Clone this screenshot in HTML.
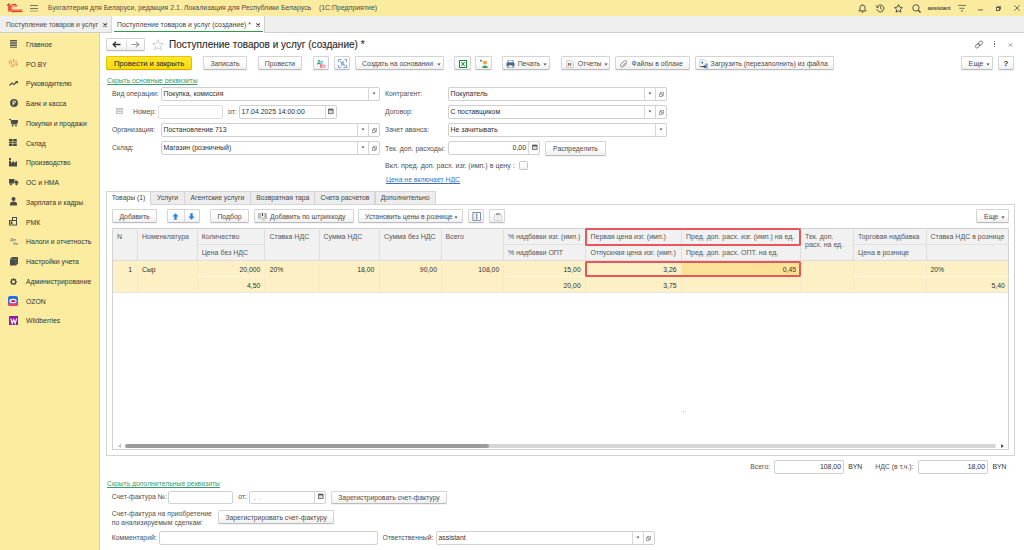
<!DOCTYPE html>
<html><head><meta charset="utf-8">
<style>
*{margin:0;padding:0;box-sizing:border-box}
html,body{width:1024px;height:550px;overflow:hidden;background:#fff;font-family:"Liberation Sans",sans-serif;font-size:7px;color:#4d4d4d}
.a{position:absolute;white-space:nowrap}
.t{position:absolute;white-space:nowrap;line-height:10px;font-size:6.85px;color:#505050}
.b{position:absolute;border:1px solid #d4d4d4;border-bottom-color:#bcbcbc;border-radius:1.5px;background:linear-gradient(#fff 40%,#efefef);box-shadow:0 .6px .6px rgba(0,0,0,.1);font-size:6.85px;color:#4a4a4a;text-align:center;line-height:12px;white-space:nowrap}
.f{position:absolute;border:1px solid #d0d0d0;border-radius:2px;background:#fff;font-size:6.9px;color:#2e2e2e;line-height:11px;white-space:nowrap;overflow:hidden}
.dv{position:absolute;top:0;bottom:0;width:1px;background:#d6d6d6}
.dd{position:absolute;top:4px;width:0;height:0;border-left:2px solid transparent;border-right:2px solid transparent;border-top:2px solid #555}
.ddf{position:absolute;width:0;height:0;border-left:1.4px solid transparent;border-right:1.4px solid transparent;border-top:1.8px solid #444}
.lnk{color:#3a9c6a;text-decoration:underline;text-decoration-skip-ink:none;font-size:6.8px}
</style></head><body>
<div class="a" style="left:0px;top:0px;width:1024px;height:16px;background:#fbeb9f"></div>
<div class="t" style="left:48px;top:3.20px;color:#4a4a4a;font-size:6.95px">Бухгалтерия для Беларуси, редакция 2.1. Локализация для Республики Беларусь&nbsp;&nbsp;&nbsp;&nbsp;(1С:Предприятие)</div>
<svg class="a" style="left:6px;top:3px" width="18" height="10" viewBox="0 0 18 10" fill="none" stroke="#e2302c"><path d="M1.2 2.6L3 1.2V8.8" stroke-width="1.4"/><path d="M10.8 3.2A3.6 3.6 0 1 0 8.2 8.6" stroke-width="1.2"/><path d="M9.6 4A2.1 2.1 0 1 0 8.2 7.2" stroke-width=".8"/><path d="M8 7.1h8.4M8 8.6h8.4" stroke-width="1"/></svg>
<svg class="a" style="left:30px;top:5px" width="8" height="7" viewBox="0 0 8 7" ><path d="M0 .5h8M0 3.5h8" stroke="#6b6650" stroke-width=".9"/><path d="M0 6h8" stroke="#a09a80" stroke-width=".9"/></svg>
<svg class="a" style="left:857.5px;top:4px" width="9" height="9" viewBox="0 0 9 9" fill="none" stroke="#3a3a3a" stroke-width=".85"><path d="M.8 6.9h7.4L7 5.6V3.6A2.5 2.5 0 002 3.6v2z"/><path d="M3.6 8.1h1.8" stroke-width="1"/><path d="M4.5.2v.6"/></svg>
<svg class="a" style="left:875.5px;top:4px" width="9" height="9" viewBox="0 0 9 9" fill="none" stroke="#3a3a3a" stroke-width=".85"><path d="M1.6 2.3A3.5 3.5 0 11.9 5"/><path d="M.6 1.4l.3 2.1 2-.4"/><path d="M4.6 2.2v2.4l1.4 1.3"/></svg>
<svg class="a" style="left:893.5px;top:4px" width="9" height="9" viewBox="0 0 9 9" fill="none" stroke="#3a3a3a" stroke-width=".85" stroke-linejoin="round"><path d="M4.5.6l1.2 2.5 2.7.4-2 1.9.5 2.8-2.4-1.3-2.4 1.3.5-2.8-2-1.9 2.7-.4z"/></svg>
<svg class="a" style="left:911.5px;top:4px" width="9" height="9" viewBox="0 0 9 9" fill="none" stroke="#3a3a3a" stroke-width=".85"><circle cx="3.9" cy="3.9" r="3.2"/><path d="M6.2 6.2l2.3 2.3" stroke-width="1.2"/></svg>
<div class="t" style="left:927.5px;top:2.8px;font-size:6px;color:#222;letter-spacing:-.05px">assistant</div>
<svg class="a" style="left:958px;top:4px" width="8" height="8" viewBox="0 0 8 8" ><path d="M0 1.4h8M1.3 4.3h5.4" stroke="#555" stroke-width=".8"/><path d="M3.3 6.9h1.4" stroke="#444" stroke-width="1.1"/></svg>
<svg class="a" style="left:978px;top:4px" width="6" height="9" viewBox="0 0 6 9" ><path d="M0 5.9h5" stroke="#444" stroke-width=".8"/></svg>
<svg class="a" style="left:996px;top:5.5px" width="5" height="5" viewBox="0 0 5 5" fill="none" stroke="#444" stroke-width=".75"><rect x=".4" y="1.5" width="3" height="3" stroke-width=".85"/><path d="M1.5 1.5V.4h3v3H3.4"/></svg>
<svg class="a" style="left:1013.5px;top:5px" width="6" height="6" viewBox="0 0 6 6" fill="none" stroke="#555" stroke-width=".85"><path d="M.3.3l5.4 5.4M5.7.3L.3 5.7"/></svg>
<div class="a" style="left:0px;top:16px;width:1024px;height:17px;background:#efefef;border-bottom:1px solid #cfcfcf"></div>
<div class="a" style="left:0px;top:16px;width:112px;height:17px;border-right:1px solid #d9d9d9;border-bottom:1px solid #cfcfcf"></div>
<div class="t" style="left:6px;top:19.60px;color:#4a4a4a;font-size:6.75px">Поступление товаров и услуг</div>
<svg class="a" style="left:103.3px;top:22.7px" width="4.2" height="4.2" viewBox="0 0 4.2 4.2" stroke="#444" stroke-width="1.1"><path d="M.4.4l3.4 3.4M3.8.4L.4 3.8"/></svg>
<div class="a" style="left:112px;top:16px;width:153px;height:17px;background:#fff;border-right:1px solid #d0d0d0"></div>
<div class="a" style="left:114px;top:31px;width:149px;height:1px;background:#2f9a48"></div>
<div class="t" style="left:117px;top:19.60px;color:#444;font-size:6.85px">Поступление товаров и услуг (создание) *</div>
<svg class="a" style="left:256.3px;top:22.7px" width="4.2" height="4.2" viewBox="0 0 4.2 4.2" stroke="#444" stroke-width="1.1"><path d="M.4.4l3.4 3.4M3.8.4L.4 3.8"/></svg>
<div class="a" style="left:0px;top:33px;width:100px;height:517px;background:#fbeca0"></div>
<div class="a" style="left:99px;top:33px;width:1px;height:517px;background:#dcd59c"></div>
<div class="t" style="left:26px;top:39.80px;color:#333">Главное</div>
<div class="t" style="left:26px;top:59.55px;color:#333">PO.BY</div>
<div class="t" style="left:26px;top:79.30px;color:#333">Руководителю</div>
<div class="t" style="left:26px;top:99.05px;color:#333">Банк и касса</div>
<div class="t" style="left:26px;top:118.80px;color:#333">Покупки и продажи</div>
<div class="t" style="left:26px;top:138.55px;color:#333">Склад</div>
<div class="t" style="left:26px;top:158.30px;color:#333">Производство</div>
<div class="t" style="left:26px;top:178.05px;color:#333">ОС и НМА</div>
<div class="t" style="left:26px;top:197.80px;color:#333">Зарплата и кадры</div>
<div class="t" style="left:26px;top:217.55px;color:#333">РМК</div>
<div class="t" style="left:26px;top:237.30px;color:#333">Налоги и отчетность</div>
<div class="t" style="left:26px;top:257.05px;color:#333">Настройки учета</div>
<div class="t" style="left:26px;top:276.80px;color:#333">Администрирование</div>
<div class="t" style="left:26px;top:296.55px;color:#333">OZON</div>
<div class="t" style="left:26px;top:316.30px;color:#333">Wildberries</div>
<svg class="a" style="left:10px;top:40px" width="7" height="8" viewBox="0 0 7 8" ><path d="M0 .6h7M0 2.2h7M0 3.8h7M0 5.4h7M0 7.2h7" stroke="#4a4a4a" stroke-width="1.1" opacity=".9"/></svg>
<svg class="a" style="left:8.5px;top:59px" width="9" height="8" viewBox="0 0 9 8" ><g stroke="#e8503a" stroke-width=".8" stroke-dasharray="1.2 .6"><path d="M4.5 0v8M0 4h9M1.3 1l6.4 6M7.7 1L1.3 7"/></g><circle cx="4.5" cy="4" r="1.3" fill="#fbeca0"/><g fill="#e83a5a"><circle cx=".8" cy="2.5" r=".6"/><circle cx="8" cy="5.5" r=".6"/><circle cx="3" cy="7.5" r=".5"/></g></svg>
<svg class="a" style="left:9px;top:80.5px" width="9" height="5" viewBox="0 0 9 5" ><path d="M.5 4.5L3 2l2 1.5L7.5 1" stroke="#4a4a4a" stroke-width="1.2" fill="none"/><path d="M6 0h3v3z" fill="#4a4a4a"/></svg>
<svg class="a" style="left:10px;top:99px" width="8" height="8" viewBox="0 0 8 8" ><circle cx="4" cy="4" r="3.9" fill="#4a4a4a"/><path d="M3.2 6.3V1.9h1.2a1.15 1.15 0 010 2.3H2.5" stroke="#fbeca0" stroke-width="1" fill="none"/></svg>
<svg class="a" style="left:9px;top:119px" width="9" height="7.5" viewBox="0 0 9 7.5" ><path d="M0 .5h1.8l1 4.5h5l1-3.5H2.5" stroke="#4a4a4a" stroke-width="1" fill="none"/><path d="M2.5 1.5h6l-1 3.5H3z" fill="#4a4a4a"/><circle cx="3.5" cy="6.6" r=".9" fill="#4a4a4a"/><circle cx="7" cy="6.6" r=".9" fill="#4a4a4a"/></svg>
<svg class="a" style="left:9px;top:139px" width="8" height="7" viewBox="0 0 8 7" ><g fill="#4a4a4a"><rect x="0" y="0" width="3.6" height="2"/><rect x="4.2" y="0" width="3.6" height="2"/><rect x="0" y="2.5" width="3.6" height="2"/><rect x="4.2" y="2.5" width="3.6" height="2"/><rect x="0" y="5" width="3.6" height="2"/><rect x="4.2" y="5" width="3.6" height="2"/></g></svg>
<svg class="a" style="left:9px;top:158px" width="8" height="8.5" viewBox="0 0 8 8.5" ><path d="M0 8.5V3h2v2l3-2v2l3-2v5.5z" fill="#4a4a4a"/><rect x="0" y="0" width="2" height="2.3" fill="#4a4a4a"/></svg>
<svg class="a" style="left:9px;top:179px" width="9.5" height="6.5" viewBox="0 0 9.5 6.5" ><rect x="0" y="0" width="5.5" height="4.5" fill="#4a4a4a"/><path d="M6 1.5h2l1.5 2v1H6z" fill="#4a4a4a"/><circle cx="2" cy="5.3" r="1.1" fill="#4a4a4a"/><circle cx="7.5" cy="5.3" r="1.1" fill="#4a4a4a"/></svg>
<svg class="a" style="left:10px;top:197px" width="7" height="8.5" viewBox="0 0 7 8.5" ><circle cx="3.5" cy="2" r="2" fill="#4a4a4a"/><path d="M0 8.5V7a3.5 2.5 0 017 0v1.5z" fill="#4a4a4a"/></svg>
<svg class="a" style="left:9px;top:217px" width="8" height="8.5" viewBox="0 0 8 8.5" ><rect x=".5" y="3.5" width="7" height="4.5" fill="none" stroke="#4a4a4a" stroke-width="1"/><rect x="3.5" y=".5" width="4" height="3" fill="none" stroke="#4a4a4a" stroke-width="1"/><rect x="1.5" y="4.5" width="2" height="2.5" fill="#4a4a4a"/></svg>
<svg class="a" style="left:10px;top:237px" width="8" height="8" viewBox="0 0 8 8" ><text x="0" y="3.5" font-size="3.8" font-style="italic" font-family="Liberation Sans" fill="#4a4a4a">Дт</text><text x="3.2" y="7.8" font-size="3.8" font-style="italic" font-family="Liberation Sans" fill="#4a4a4a">Кт</text></svg>
<svg class="a" style="left:9.5px;top:257px" width="8" height="8.5" viewBox="0 0 8 8.5" ><path d="M0 2.2L2 0h6v6.3L6 8.5H0z" fill="#4a4a4a"/><path d="M0 2.2h6v6.3M6 2.2L8 0" stroke="#888" stroke-width=".5" fill="none"/></svg>
<svg class="a" style="left:10px;top:277.5px" width="7" height="7.5" viewBox="0 0 7 7.5" ><circle cx="3.5" cy="3.75" r="2.2" fill="none" stroke="#4a4a4a" stroke-width="1.3"/><g stroke="#4a4a4a" stroke-width="1.1"><path d="M3.5 0v1.3M3.5 6.2v1.3M0 3.75h1.3M5.7 3.75H7M1 1.25l.9.9M5.1 5.35l.9.9M6 1.25l-.9.9M1.9 5.35L1 6.25"/></g></svg>
<svg class="a" style="left:8.3px;top:295.5px" width="10" height="10" viewBox="0 0 10 10" ><rect x="0" y="0" width="10" height="10" rx="2.2" fill="#1f6fe8"/><path d="M0 6.5Q5 9 10 6.5V8a2 2 0 01-2 2H2a2 2 0 01-2-2z" fill="#f23a6b"/><ellipse cx="5" cy="5" rx="3.6" ry="2.3" fill="#fff"/><ellipse cx="5.2" cy="5.1" rx="2.4" ry="1.2" fill="#e8174a"/></svg>
<svg class="a" style="left:8.8px;top:315.7px" width="9.5" height="9.5" viewBox="0 0 9.5 9.5" ><rect x="0" y="0" width="9.5" height="9.5" rx=".8" fill="#8b1fa3"/><path d="M1.8 2.5l1.4 5 1.5-4 1.5 4 1.4-5" stroke="#fff" stroke-width="1.1" fill="none"/></svg>
<div class="b" style="left:106px;top:38px;width:39px;height:12.5px"></div>
<div class="a" style="left:126px;top:39px;width:1px;height:11px;background:#ddd"></div>
<svg class="a" style="left:112px;top:41px" width="9" height="7" viewBox="0 0 9 7" fill="none" stroke="#333" stroke-width="1.3"><path d="M8.5 3.5H1.5M4 .8L1.2 3.5 4 6.2"/></svg>
<svg class="a" style="left:131px;top:41px" width="9" height="7" viewBox="0 0 9 7" fill="none" stroke="#999" stroke-width="1.1"><path d="M.5 3.5h7M5 .8l2.8 2.7L5 6.2"/></svg>
<svg class="a" style="left:152px;top:38.5px" width="12" height="12" viewBox="0 0 12 12" fill="none" stroke="#c8c8c8" stroke-width=".9"><path d="M6 .8l1.6 3.4 3.7.4-2.8 2.5.8 3.7L6 8.9 2.7 10.8l.8-3.7L.7 4.6l3.7-.4z"/></svg>
<div class="a" style="left:169px;top:38px;font-size:10px;line-height:13px;color:#2a2a2a;-webkit-text-stroke:.12px #2a2a2a">Поступление товаров и услуг (создание) *</div>
<svg class="a" style="left:973.5px;top:39.5px" width="10" height="9" viewBox="0 0 10 9" fill="none" stroke="#707070" stroke-width=".85"><g transform="rotate(-42 5 4.5)"><rect x=".6" y="2.9" width="5.2" height="3.2" rx="1.6"/><rect x="4.2" y="2.9" width="5.2" height="3.2" rx="1.6"/></g></svg>
<div class="a" style="left:993.8px;top:41px;width:1.2px;height:6px;background:linear-gradient(#666 0 1.3px,transparent 1.3px 2.3px,#666 2.3px 3.7px,transparent 3.7px 4.7px,#666 4.7px)"></div>
<svg class="a" style="left:1008px;top:43px" width="5" height="4" viewBox="0 0 5 4" stroke="#888" stroke-width=".8"><path d="M.5.2l4 3.6M4.5.2l-4 3.6"/></svg>
<div class="b" style="left:106px;top:56px;width:86px;height:14px;line-height:13.4px;background:linear-gradient(#ffe82e,#f7da06);border-color:#e0c410 #dcbf08 #cfae00;color:#333;font-size:7.6px;-webkit-text-stroke:.1px #333">Провести и закрыть</div>
<div class="b" style="left:203px;top:56px;width:44px;height:14px;line-height:13px;">Записать</div>
<div class="b" style="left:258px;top:56px;width:44px;height:14px;line-height:13px;">Провести</div>
<div class="b" style="left:313px;top:56px;width:16px;height:14px;line-height:13px;"><svg style="position:absolute;left:3px;top:2px" width="10" height="10" viewBox="0 0 10 10"><text x="0" y="4.6" font-size="5" font-weight="bold" fill="#2a9a55" font-family="Liberation Sans">Дт</text><text x="3" y="8.8" font-size="5" font-weight="bold" fill="#f05050" font-family="Liberation Sans">Кт</text></svg></div>
<div class="b" style="left:334px;top:56px;width:16px;height:14px;line-height:13px;"><svg style="position:absolute;left:3px;top:2px" width="9" height="9" viewBox="0 0 9 9" fill="none" stroke="#6f95d0" stroke-width=".9"><path d="M.5 3V.5h3M8.5 6v2.5h-3M.5 6v2.5h2M8.5 3V.5h-2"/><path d="M2 2.5l2 1.5v3M7 6.5L5 5V2" stroke="#4a7fcf"/></svg></div>
<div class="b" style="left:355px;top:56px;width:89px;height:14px;line-height:13px;text-align:left;padding-left:6px">Создать на основании<svg style="position:absolute;left:81px;top:5.5px" width="4" height="3" viewBox="0 0 4 3"><path d="M.4.5h3.2L2 2.5z" fill="#444"/></svg></div>
<div class="b" style="left:454px;top:56px;width:17px;height:14px;line-height:13px;"><svg style="position:absolute;left:4px;top:2.5px" width="8" height="8" viewBox="0 0 8 8"><rect x=".5" y=".5" width="7" height="7" fill="#fff" stroke="#1f8a3c" stroke-width="1"/><path d="M2.3 2l3.4 4M5.7 2L2.3 6" stroke="#1f8a3c" stroke-width="1"/></svg></div>
<div class="b" style="left:475px;top:56px;width:17px;height:14px;line-height:13px;"><svg style="position:absolute;left:3.5px;top:2px" width="9" height="10" viewBox="0 0 9 10"><path d="M.6 1.2l1.8 1.6M.6 1.2h1.3M.6 1.2v1.3" stroke="#444" stroke-width=".7" fill="none"/><circle cx="5" cy="3.6" r="1.9" fill="#f5a02a"/><path d="M2.2 9a2.8 2.6 0 015.6 0z" fill="#34a060"/></svg></div>
<div class="b" style="left:502px;top:56px;width:48px;height:14px;line-height:13px;"><svg style="position:absolute;left:3px;top:2.5px" width="9" height="8" viewBox="0 0 9 8"><rect x="2" y="0" width="5" height="3" fill="#fff" stroke="#555" stroke-width=".7"/><rect x=".5" y="2.5" width="8" height="4" rx="1" fill="#3e68a8"/><rect x="2" y="5" width="5" height="3" fill="#fff" stroke="#555" stroke-width=".7"/></svg><span style="position:absolute;left:14.7px;">Печать</span><svg style="position:absolute;left:40px;top:5.5px" width="4" height="3" viewBox="0 0 4 3"><path d="M.4.5h3.2L2 2.5z" fill="#444"/></svg></div>
<div class="b" style="left:561px;top:56px;width:49px;height:14px;line-height:13px;"><svg style="position:absolute;left:4px;top:2.5px" width="8" height="8" viewBox="0 0 8 8"><path d="M.8.4h4.5l2 2v5.2H.8z" fill="#fafafa" stroke="#aaa" stroke-width=".6"/><rect x="2" y="3" width="1.3" height="2.6" fill="#e03a3a"/><rect x="3.8" y="3" width="1.3" height="2.6" fill="#2ea050"/></svg><span style="position:absolute;left:15.8px;">Отчеты</span><svg style="position:absolute;left:41.8px;top:5.5px" width="4" height="3" viewBox="0 0 4 3"><path d="M.4.5h3.2L2 2.5z" fill="#444"/></svg></div>
<div class="b" style="left:615px;top:56px;width:75px;height:14px;line-height:13px;"><svg style="position:absolute;left:4px;top:2.5px" width="8" height="8" viewBox="0 0 8 8" fill="none" stroke="#8a8a8a" stroke-width="1"><path d="M6.8 3.2L3.4 6.6a1.7 1.7 0 01-2.4-2.4L4.6.6a1.1 1.1 0 011.6 1.6L2.7 5.7"/></svg><span style="position:absolute;left:15.5px;">Файлы в облаке</span></div>
<div class="b" style="left:695px;top:56px;width:139px;height:14px;line-height:13px;"><svg style="position:absolute;left:2.5px;top:2px" width="10" height="10" viewBox="0 0 10 10"><path d="M.8 8.5V.8h4.5l2 2" fill="#fff" stroke="#aaa" stroke-width=".6"/><circle cx="3.2" cy="3.4" r="1" fill="#2a7de0"/><circle cx="3.6" cy="4.3" r=".6" fill="#3cb060"/><path d="M6 4.5h2.6v5H6z" fill="#6a9ee0"/><path d="M1.5 7.6h4.6M4.8 6.4l1.4 1.2-1.4 1.2" stroke="#222" stroke-width=".9" fill="none"/></svg><span style="position:absolute;left:14.6px;">Загрузить (перезаполнить) из файла</span></div>
<div class="b" style="left:961px;top:56px;width:32px;height:14px;line-height:13px;text-align:left;padding-left:6.6px;font-size:7.2px">Еще<svg style="position:absolute;left:24.3px;top:5.5px" width="4" height="3" viewBox="0 0 4 3"><path d="M.4.5h3.2L2 2.5z" fill="#444"/></svg></div>
<div class="b" style="left:998px;top:56px;width:16px;height:14px;line-height:13px;font-weight:bold;color:#333;font-size:8px">?</div>
<div class="t lnk" style="left:107px;top:75.6px">Скрыть основные реквизиты</div>
<div class="t" style="left:112px;top:89.00px;">Вид операции:</div>
<div class="f" style="left:161px;top:87px;width:219px;height:14px;line-height:12px;"><span style="position:absolute;left:1.5px;top:0;">Покупка, комиссия</span><div class="dv" style="left:206px"></div><svg style="position:absolute;left:209.5px;top:3.8px" width="4" height="3" viewBox="0 0 4 3"><path d="M.5.6h3L2 2.4z" fill="#555"/></svg></div>
<svg class="a" style="left:115.5px;top:107.5px" width="7" height="6" viewBox="0 0 7 6" ><rect x=".5" y=".5" width="6" height="5" fill="#eee" stroke="#aaa" stroke-width=".7"/><path d="M1.5 2h4M1.5 3.5h4" stroke="#aaa" stroke-width=".6"/></svg>
<div class="t" style="left:133px;top:107.00px;">Номер:</div>
<div class="f" style="left:158px;top:105px;width:65px;height:14px;line-height:12px;border-color:#dedede"><span style="position:absolute;left:1.5px;top:0;"></span></div>
<div class="t" style="left:228px;top:107.00px;">от:</div>
<div class="f" style="left:239px;top:105px;width:98px;height:14px;line-height:12px;"><span style="position:absolute;left:1.5px;top:0;">17.04.2025 14:00:00</span><div class="dv" style="left:85px"></div><svg style="position:absolute;left:87.80000000000001px;top:1.8px" width="6" height="6" viewBox="0 0 6 6"><rect x=".5" y="1.2" width="4.6" height="4.3" fill="#dcdcdc" stroke="#606060" stroke-width=".8"/><rect x=".5" y="1.2" width="4.6" height="1.2" fill="#505050"/><path d="M1.8 .2v1.2M3.8.2v1.2" stroke="#606060" stroke-width=".6"/></svg></div>
<div class="t" style="left:112px;top:125.00px;">Организация:</div>
<div class="f" style="left:161px;top:123px;width:219px;height:14px;line-height:12px;"><span style="position:absolute;left:1.5px;top:0;">Постановление 713</span><div class="dv" style="left:195px"></div><div class="dv" style="left:206px"></div><svg style="position:absolute;left:199.0px;top:3.8px" width="4" height="3" viewBox="0 0 4 3"><path d="M.5.6h3L2 2.4z" fill="#555"/></svg><svg style="position:absolute;left:209.5px;top:3.5px" width="5" height="5" viewBox="0 0 5 5" fill="none" stroke="#555" stroke-width=".6"><path d="M.3 1.9h2.8v2.8H.3z"/><path d="M1.6 1.9V.3h3.1v2.9H3.1"/></svg></div>
<div class="t" style="left:112px;top:143.00px;">Склад:</div>
<div class="f" style="left:161px;top:141px;width:219px;height:14px;line-height:12px;"><span style="position:absolute;left:1.5px;top:0;">Магазин (розничный)</span><div class="dv" style="left:195px"></div><div class="dv" style="left:206px"></div><svg style="position:absolute;left:199.0px;top:3.8px" width="4" height="3" viewBox="0 0 4 3"><path d="M.5.6h3L2 2.4z" fill="#555"/></svg><svg style="position:absolute;left:209.5px;top:3.5px" width="5" height="5" viewBox="0 0 5 5" fill="none" stroke="#555" stroke-width=".6"><path d="M.3 1.9h2.8v2.8H.3z"/><path d="M1.6 1.9V.3h3.1v2.9H3.1"/></svg></div>
<div class="t" style="left:385px;top:89.00px;">Контрагент:</div>
<div class="f" style="left:448px;top:87px;width:219px;height:14px;line-height:12px;"><span style="position:absolute;left:1.5px;top:0;">Покупатель</span><div class="dv" style="left:195px"></div><div class="dv" style="left:206px"></div><svg style="position:absolute;left:199.0px;top:3.8px" width="4" height="3" viewBox="0 0 4 3"><path d="M.5.6h3L2 2.4z" fill="#555"/></svg><svg style="position:absolute;left:209.5px;top:3.5px" width="5" height="5" viewBox="0 0 5 5" fill="none" stroke="#555" stroke-width=".6"><path d="M.3 1.9h2.8v2.8H.3z"/><path d="M1.6 1.9V.3h3.1v2.9H3.1"/></svg></div>
<div class="t" style="left:385px;top:107.00px;">Договор:</div>
<div class="f" style="left:448px;top:105px;width:219px;height:14px;line-height:12px;"><span style="position:absolute;left:1.5px;top:0;">С поставщиком</span><div class="dv" style="left:195px"></div><div class="dv" style="left:206px"></div><svg style="position:absolute;left:199.0px;top:3.8px" width="4" height="3" viewBox="0 0 4 3"><path d="M.5.6h3L2 2.4z" fill="#555"/></svg><svg style="position:absolute;left:209.5px;top:3.5px" width="5" height="5" viewBox="0 0 5 5" fill="none" stroke="#555" stroke-width=".6"><path d="M.3 1.9h2.8v2.8H.3z"/><path d="M1.6 1.9V.3h3.1v2.9H3.1"/></svg></div>
<div class="t" style="left:385px;top:125.00px;">Зачет аванса:</div>
<div class="f" style="left:448px;top:123px;width:219px;height:14px;line-height:12px;"><span style="position:absolute;left:1.5px;top:0;">Не зачитывать</span><div class="dv" style="left:206px"></div><svg style="position:absolute;left:210.0px;top:3.8px" width="4" height="3" viewBox="0 0 4 3"><path d="M.5.6h3L2 2.4z" fill="#555"/></svg></div>
<div class="t" style="left:385px;top:143.50px;font-size:7px">Тек. доп. расходы:</div>
<div class="f" style="left:448px;top:141px;width:92px;height:14px;line-height:12px;"><span style="position:absolute;right:13px;top:0;">0,00</span><div class="dv" style="left:79px"></div><svg style="position:absolute;left:82.5px;top:1.8px" width="6" height="6" viewBox="0 0 6 6"><rect x=".5" y="1.2" width="4.6" height="4.3" fill="#dcdcdc" stroke="#606060" stroke-width=".8"/><rect x=".5" y="1.2" width="4.6" height="1.2" fill="#505050"/><path d="M1.8 .2v1.2M3.8.2v1.2" stroke="#606060" stroke-width=".6"/></svg></div>
<div class="b" style="left:545px;top:141px;width:61px;height:15px;line-height:14px;">Распределить</div>
<div class="t" style="left:385px;top:160.50px;font-size:7.1px">Вкл. пред. доп. расх. изг. (имп.) в цену :</div>
<div class="a" style="left:519px;top:161px;width:9px;height:9px;border:1px solid #c4c4c4;border-radius:1.5px;background:linear-gradient(#fff 60%,#f0f0f0)"></div>
<div class="t" style="left:386px;top:174.8px;color:#3b6fb8;text-decoration:underline;text-decoration-skip-ink:none">Цена не включает НДС</div>
<div class="a" style="left:106px;top:204px;width:909px;height:252px;border:1px solid #d4d4d4"></div>
<div class="a" style="left:150.4px;top:191px;width:34.2px;height:14px;background:#ececec;border:1px solid #d4d4d4;text-align:center;line-height:12px;color:#444;font-size:6.8px">Услуги</div>
<div class="a" style="left:183.6px;top:191px;width:67.6px;height:14px;background:#ececec;border:1px solid #d4d4d4;text-align:center;line-height:12px;color:#444;font-size:6.8px">Агентские услуги</div>
<div class="a" style="left:250.2px;top:191px;width:65.2px;height:14px;background:#ececec;border:1px solid #d4d4d4;text-align:center;line-height:12px;color:#444;font-size:6.8px">Возвратная тара</div>
<div class="a" style="left:314.4px;top:191px;width:61.1px;height:14px;background:#ececec;border:1px solid #d4d4d4;text-align:center;line-height:12px;color:#444;font-size:6.8px">Счета расчетов</div>
<div class="a" style="left:374.5px;top:191px;width:61.2px;height:14px;background:#ececec;border:1px solid #d4d4d4;text-align:center;line-height:12px;color:#444;font-size:6.8px">Дополнительно</div>
<div class="a" style="left:106px;top:190.5px;width:45px;height:14.5px;background:#fff;border:1px solid #d4d4d4;border-bottom:none;text-align:center;line-height:12px;color:#444;font-size:6.8px">Товары (1)</div>
<div class="b" style="left:112px;top:209px;width:45px;height:14px;line-height:13px;">Добавить</div>
<div class="b" style="left:167px;top:209px;width:33px;height:14px;line-height:13px;"><div style="position:absolute;left:15.5px;top:0;bottom:0;width:1px;background:#d8d8d8"></div><svg style="position:absolute;left:4px;top:3px" width="7" height="7" viewBox="0 0 7 7"><path d="M3.5 .2L6.6 3.6H4.7V6.8H2.3V3.6H.4z" fill="#2a82e6"/></svg><svg style="position:absolute;left:19.8px;top:3px" width="7" height="7" viewBox="0 0 7 7"><path d="M3.5 6.8L6.6 3.4H4.7V.2H2.3v3.2H.4z" fill="#2a82e6"/></svg></div>
<div class="b" style="left:210px;top:209px;width:39px;height:14px;line-height:13px;">Подбор</div>
<div class="b" style="left:254px;top:209px;width:100px;height:14px;line-height:13px;"><svg style="position:absolute;left:3px;top:2.5px" width="9" height="9" viewBox="0 0 9 9"><path d="M.8 0v6M2.2 0v5M7 0v6M8.2 0v6" stroke="#8a8a8a" stroke-width=".9"/><path d="M4.5 0v3" stroke="#444" stroke-width="1.2"/><circle cx="4.3" cy="5.6" r="1.4" fill="#cfe6f7" stroke="#9bb" stroke-width=".5"/><path d="M5.2 6.6l1.5 1.6" stroke="#d9a070" stroke-width="1"/></svg><span style="position:absolute;left:15px;">Добавить по штрихкоду</span></div>
<div class="b" style="left:358px;top:209px;width:105px;height:14px;line-height:13px;text-align:left;padding-left:6px">Установить цены в рознице<svg style="position:absolute;left:95px;top:5.5px" width="4" height="3" viewBox="0 0 4 3"><path d="M.4.5h3.2L2 2.5z" fill="#444"/></svg></div>
<div class="b" style="left:468px;top:209px;width:16px;height:14px;line-height:13px;"><svg style="position:absolute;left:3px;top:2px" width="9" height="9" viewBox="0 0 9 9"><rect x=".9" y=".5" width="7.6" height="7.8" fill="#fff" stroke="#5a6fa0" stroke-width=".8"/><rect x="1.3" y=".9" width="1" height="7" fill="#ccc"/><path d="M4.7 1.5v5.8" stroke="#444" stroke-width=".6"/><path d="M3.6 3.2l1.1-1.3 1.1 1.3zM3.6 5.6l1.1 1.3 1.1-1.3z" fill="#3a6fc0"/></svg></div>
<div class="b" style="left:489px;top:209px;width:16px;height:14px;line-height:13px;"><svg style="position:absolute;left:2.5px;top:2px" width="10" height="10" viewBox="0 0 10 10"><path d="M1.5 2.5Q1 5 1.3 8.5h7.4Q9 5 8.5 2.5L6 1.5H4z" fill="#f3f3f3" stroke="#bbb" stroke-width=".6"/><path d="M5 1.6v6.9" stroke="#ccc" stroke-width=".5"/><path d="M2.8 1.6l1.2 1.6L5 1.8M7.2 1.6L6 3.2 5 1.8" fill="#555"/></svg></div>
<div class="b" style="left:976px;top:209px;width:33px;height:14px;line-height:13px;text-align:left;padding-left:7px;font-size:7px">Еще<svg style="position:absolute;left:24px;top:5.5px" width="4" height="3" viewBox="0 0 4 3"><path d="M.4.5h3.2L2 2.5z" fill="#444"/></svg></div>
<div class="a" style="left:112px;top:228px;width:897px;height:222px;border:1px solid #d2d2d2"></div>
<div class="a" style="left:113px;top:229px;width:895px;height:32px;background:#f1f1f1"></div>
<div class="a" style="left:113px;top:261px;width:895px;height:30.5px;background:#fcf0c4"></div>
<div class="a" style="left:113px;top:260px;width:895px;height:1px;background:#dcdcdc"></div>
<div class="a" style="left:113px;top:291.5px;width:895px;height:1px;background:#e6e6e6"></div>
<div class="a" style="left:136.8px;top:229px;width:1px;height:32px;background:#dedede"></div>
<div class="a" style="left:197.0px;top:229px;width:1px;height:32px;background:#dedede"></div>
<div class="a" style="left:264.3px;top:229px;width:1px;height:32px;background:#dedede"></div>
<div class="a" style="left:319.0px;top:229px;width:1px;height:32px;background:#dedede"></div>
<div class="a" style="left:379.0px;top:229px;width:1px;height:32px;background:#dedede"></div>
<div class="a" style="left:441.2px;top:229px;width:1px;height:32px;background:#dedede"></div>
<div class="a" style="left:503.3px;top:229px;width:1px;height:32px;background:#dedede"></div>
<div class="a" style="left:584.7px;top:229px;width:1px;height:32px;background:#dedede"></div>
<div class="a" style="left:680.7px;top:229px;width:1px;height:32px;background:#dedede"></div>
<div class="a" style="left:800.3px;top:229px;width:1px;height:32px;background:#dedede"></div>
<div class="a" style="left:853.0px;top:229px;width:1px;height:32px;background:#dedede"></div>
<div class="a" style="left:926.2px;top:229px;width:1px;height:32px;background:#dedede"></div>
<div class="a" style="left:197.5px;top:244.1px;width:67.3px;height:1px;background:#e2e2e2"></div>
<div class="a" style="left:503.8px;top:244.1px;width:297.0px;height:1px;background:#e2e2e2"></div>
<div class="a" style="left:853.5px;top:244.1px;width:155.2px;height:1px;background:#e2e2e2"></div>
<div class="a" style="left:136.8px;top:261px;width:1px;height:30.5px;background:#f7ebc6"></div>
<div class="a" style="left:197.0px;top:261px;width:1px;height:30.5px;background:#f7ebc6"></div>
<div class="a" style="left:264.3px;top:261px;width:1px;height:30.5px;background:#f7ebc6"></div>
<div class="a" style="left:319.0px;top:261px;width:1px;height:30.5px;background:#f7ebc6"></div>
<div class="a" style="left:379.0px;top:261px;width:1px;height:30.5px;background:#f7ebc6"></div>
<div class="a" style="left:441.2px;top:261px;width:1px;height:30.5px;background:#f7ebc6"></div>
<div class="a" style="left:503.3px;top:261px;width:1px;height:30.5px;background:#f7ebc6"></div>
<div class="a" style="left:584.7px;top:261px;width:1px;height:30.5px;background:#f7ebc6"></div>
<div class="a" style="left:680.7px;top:261px;width:1px;height:30.5px;background:#f7ebc6"></div>
<div class="a" style="left:800.3px;top:261px;width:1px;height:30.5px;background:#f7ebc6"></div>
<div class="a" style="left:853.0px;top:261px;width:1px;height:30.5px;background:#f7ebc6"></div>
<div class="a" style="left:926.2px;top:261px;width:1px;height:30.5px;background:#f7ebc6"></div>
<div class="a" style="left:197.5px;top:276.0px;width:67.3px;height:1px;background:#fdf7e0"></div>
<div class="a" style="left:503.8px;top:276.0px;width:297.0px;height:1px;background:#fdf7e0"></div>
<div class="a" style="left:853.5px;top:276.0px;width:155.2px;height:1px;background:#fdf7e0"></div>
<div class="a" style="left:681.5px;top:262px;width:119px;height:14px;background:#fbe297"></div>
<div class="t" style="left:116.9px;top:231.60px;color:#555;font-size:7px">N</div>
<div class="t" style="left:142px;top:231.60px;color:#555;font-size:7px">Номенклатура</div>
<div class="t" style="left:201.7px;top:231.60px;color:#555;font-size:7px">Количество</div>
<div class="t" style="left:269.5px;top:231.60px;color:#555;font-size:7px">Ставка НДС</div>
<div class="t" style="left:323.5px;top:231.60px;color:#555;font-size:7px">Сумма НДС</div>
<div class="t" style="left:384px;top:231.60px;color:#555;font-size:7px">Сумма без НДС</div>
<div class="t" style="left:445.5px;top:231.60px;color:#555;font-size:7px">Всего</div>
<div class="t" style="left:508px;top:231.60px;color:#555;font-size:7px">% надбавки изг. (имп.)</div>
<div class="t" style="left:590.5px;top:231.60px;color:#555;font-size:7px">Первая цена изг. (имп.)</div>
<div class="t" style="left:686px;top:231.60px;color:#555;font-size:7px">Пред. доп. расх. изг. (имп.) на ед.</div>
<div class="t" style="left:805px;top:231.60px;color:#555;font-size:7px">Тек. доп.</div>
<div class="t" style="left:858px;top:231.60px;color:#555;font-size:7px">Торговая надбавка</div>
<div class="t" style="left:930.5px;top:231.60px;color:#555;font-size:7px">Ставка НДС в рознице</div>
<div class="t" style="left:201.7px;top:248.40px;color:#555;font-size:7px">Цена без НДС</div>
<div class="t" style="left:508px;top:248.40px;color:#555;font-size:7px">% надбавки ОПТ</div>
<div class="t" style="left:590.5px;top:248.40px;color:#555;font-size:7px">Отпускная цена изг. (имп.)</div>
<div class="t" style="left:686px;top:248.40px;color:#555;font-size:7px">Пред. доп. расх. ОПТ. на ед.</div>
<div class="t" style="left:858px;top:248.40px;color:#555;font-size:7px">Цена в рознице</div>
<div class="t" style="left:805px;top:240.00px;color:#555;font-size:7px">расх. на ед.</div>
<div class="t" style="right:891.90px;top:264.50px;color:#333">1</div>
<div class="t" style="right:763.70px;top:264.50px;color:#333">20,000</div>
<div class="t" style="right:763.70px;top:280.50px;color:#333">4,50</div>
<div class="t" style="right:649.70px;top:264.50px;color:#333">18,00</div>
<div class="t" style="right:587.00px;top:264.50px;color:#333">90,00</div>
<div class="t" style="right:524.80px;top:264.50px;color:#333">108,00</div>
<div class="t" style="right:443.30px;top:264.50px;color:#333">15,00</div>
<div class="t" style="right:443.30px;top:280.50px;color:#333">20,00</div>
<div class="t" style="right:347.50px;top:264.50px;color:#333">3,26</div>
<div class="t" style="right:347.50px;top:280.50px;color:#333">3,75</div>
<div class="t" style="right:228.00px;top:264.50px;color:#333">0,45</div>
<div class="t" style="right:19.20px;top:280.50px;color:#333">5,40</div>
<div class="t" style="left:142px;top:264.50px;color:#333">Сыр</div>
<div class="t" style="left:269.7px;top:264.50px;color:#333">20%</div>
<div class="t" style="left:930.5px;top:264.50px;color:#333">20%</div>
<div class="a" style="left:584.5px;top:227.5px;width:216.5px;height:18.5px;border:2px solid #e8555a;border-radius:1.5px"></div>
<div class="a" style="left:584.5px;top:260.5px;width:216.5px;height:16.8px;border:2px solid #e8555a;border-radius:1.5px"></div>
<div class="a" style="left:488px;top:444px;width:508px;height:4px;background:#d6d6d6;border-radius:0 2px 2px 0"></div>
<div class="a" style="left:125px;top:443.8px;width:364px;height:4px;background:#9b9b9b;border-radius:2px"></div>
<svg class="a" style="left:117.5px;top:444px" width="3" height="4" viewBox="0 0 3 4" ><path d="M0 2L3 0v4z" fill="#bbb"/></svg>
<svg class="a" style="left:1001px;top:444px" width="3" height="4" viewBox="0 0 3 4" ><path d="M3 2L0 0v4z" fill="#555"/></svg>
<div class="a" style="left:683px;top:411px;width:1px;height:1px;background:#aaa"></div>
<div class="t" style="left:750.3px;top:461.60px;">Всего:</div>
<div class="f" style="left:774px;top:460px;width:70px;height:14px;line-height:12px;"><span style="position:absolute;right:2px;top:0;">108,00</span></div>
<div class="t" style="left:848.2px;top:461.60px;color:#333">BYN</div>
<div class="t" style="left:875.3px;top:461.60px;">НДС (в т.ч.):</div>
<div class="f" style="left:918px;top:460px;width:70px;height:14px;line-height:12px;"><span style="position:absolute;right:2px;top:0;">18,00</span></div>
<div class="t" style="left:992.4px;top:461.60px;color:#333">BYN</div>
<div class="t lnk" style="left:107px;top:479.2px">Скрыть дополнительные реквизиты</div>
<div class="t" style="left:111.7px;top:492.40px;">Счет-фактура №:</div>
<div class="f" style="left:168px;top:491px;width:65px;height:13px;line-height:11px;"><span style="position:absolute;left:1.5px;top:0;"></span></div>
<div class="t" style="left:238.3px;top:492.40px;">от:</div>
<div class="f" style="left:249px;top:491px;width:77px;height:13px;line-height:11px;color:#888"><span style="position:absolute;left:1.5px;top:0;">&nbsp;.&nbsp;&nbsp;.</span><div class="dv" style="left:64px"></div><svg style="position:absolute;left:67.5px;top:1.3px" width="6" height="6" viewBox="0 0 6 6"><rect x=".5" y="1.2" width="4.6" height="4.3" fill="#dcdcdc" stroke="#606060" stroke-width=".8"/><rect x=".5" y="1.2" width="4.6" height="1.2" fill="#505050"/><path d="M1.8 .2v1.2M3.8.2v1.2" stroke="#606060" stroke-width=".6"/></svg></div>
<div class="b" style="left:331px;top:490.5px;width:116px;height:13.5px;line-height:12.5px;">Зарегистрировать счет-фактуру</div>
<div class="t" style="left:111.7px;top:509.30px;">Счет-фактура на приобретение</div>
<div class="t" style="left:111.7px;top:517.70px;">по анализируемым сделкам:</div>
<div class="b" style="left:218.4px;top:509.6px;width:115.6px;height:14.100000000000023px;line-height:13.100000000000023px;">Зарегистрировать счет-фактуру</div>
<div class="t" style="left:111.7px;top:532.50px;">Комментарий:</div>
<div class="f" style="left:159px;top:531px;width:219px;height:14px;line-height:12px;"><span style="position:absolute;left:1.5px;top:0;"></span></div>
<div class="t" style="left:382.6px;top:532.50px;">Ответственный:</div>
<div class="f" style="left:436px;top:531px;width:219px;height:14px;line-height:12px;color:#333"><span style="position:absolute;left:1.5px;top:0;">assistant</span><div class="dv" style="left:195px"></div><div class="dv" style="left:206px"></div><svg style="position:absolute;left:198.5px;top:3.8px" width="4" height="3" viewBox="0 0 4 3"><path d="M.5.6h3L2 2.4z" fill="#555"/></svg><svg style="position:absolute;left:209px;top:3.5px" width="5" height="5" viewBox="0 0 5 5" fill="none" stroke="#555" stroke-width=".6"><path d="M.3 1.9h2.8v2.8H.3z"/><path d="M1.6 1.9V.3h3.1v2.9H3.1"/></svg></div>
</body></html>
